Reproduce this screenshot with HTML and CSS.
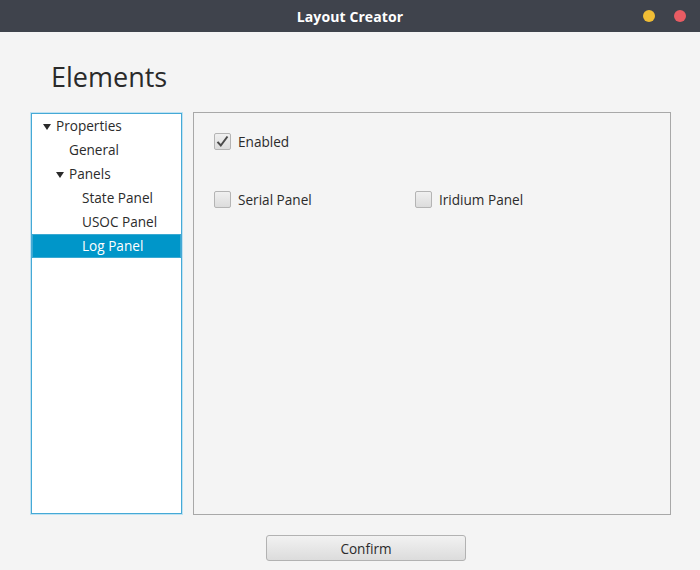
FILE: index.html
```html
<!DOCTYPE html>
<html>
<head>
<meta charset="utf-8">
<link rel="stylesheet" href="styles.css">
</head>
<body>
<div class="window">
  <div class="titlebar">
    <div class="title">Layout Creator</div>
    <div class="controls">
      <span class="dot min"></span>
      <span class="dot close"></span>
    </div>
  </div>
  <div class="content">
    <h1 class="heading">Elements</h1>
    <div class="main">
      <div class="tree">
        <div class="row lvl0"><span class="arrow"></span>Properties</div>
        <div class="row lvl1">General</div>
        <div class="row lvl1"><span class="arrow"></span>Panels</div>
        <div class="row lvl2">State Panel</div>
        <div class="row lvl2">USOC Panel</div>
        <div class="row lvl2 selected">Log Panel</div>
      </div>
      <div class="panel">
        <label class="check first">
          <span class="box">
            <svg width="13" height="13" viewBox="0 0 13 13"><path d="M1.5 6.8 L4.8 10.5 L11.5 1.5" fill="none" stroke="#4a4a4a" stroke-width="2"/></svg>
          </span>
          Enabled
        </label>
        <div class="checkrow">
          <label class="check serial"><span class="box"></span>Serial Panel</label>
          <label class="check"><span class="box"></span>Iridium Panel</label>
        </div>
      </div>
    </div>
    <div class="footer">
      <button class="btn">Confirm</button>
    </div>
  </div>
</div>
</body>
</html>
```
FILE: styles.css
```css
html, body {
  margin: 0;
  padding: 0;
}
body {
  width: 700px;
  height: 570px;
  overflow: hidden;
  background: #f4f4f4;
  font-family: "Open Sans", "Noto Sans", sans-serif;
  color: #2b2b2b;
}
.window {
  display: flex;
  flex-direction: column;
  height: 570px;
}
.titlebar {
  height: 32px;
  background: #3f434c;
  display: flex;
  align-items: center;
  justify-content: center;
  position: relative;
  flex: none;
}
.title {
  color: #ffffff;
  font-family: "Open Sans", "DejaVu Sans", sans-serif;
  font-weight: 700;
  font-size: 14px;
  letter-spacing: 0.1px;
}
.controls {
  position: absolute;
  right: 14px;
  top: 10px;
  display: flex;
  gap: 19px;
}
.dot {
  width: 12px;
  height: 12px;
  border-radius: 50%;
  display: block;
}
.dot.min { background: #f0bd35; }
.dot.close { background: #e85c63; }
.content {
  flex: 1;
  display: flex;
  flex-direction: column;
  padding: 0 29px 0 31px;
}
.heading {
  margin: 28px 0 0 20px;
  height: 52px;
  font-weight: 400;
  font-size: 27px;
  line-height: 34px;
  color: #2a2a2a;
}
.main {
  display: flex;
  gap: 11px;
  height: 403px;
}
.tree {
  width: 149px;
  height: 399px;
  margin-top: 1px;
  background: #ffffff;
  border: 1px solid #45a9d6;
  box-shadow: 0 0 0 1px #bfe2f2;
  padding-top: 0;
  box-sizing: content-box;
}
.row {
  height: 24px;
  line-height: 24px;
  font-size: 13.6px;
  color: #2b2b2b;
  display: flex;
  align-items: center;
  white-space: nowrap;
}
.lvl0 { padding-left: 11px; }
.lvl1 { padding-left: 37px; }
.lvl1:has(.arrow) { padding-left: 24px; }
.lvl2 { padding-left: 50px; }
.arrow {
  width: 0;
  height: 0;
  border-left: 4px solid transparent;
  border-right: 4px solid transparent;
  border-top: 6px solid #2b2b2b;
  margin-right: 5px;
  margin-top: 1px;
}
.row.selected {
  background: #0096c9;
  color: #ffffff;
  box-shadow: inset 0 0 0 1px #3aa9d2;
}
.panel {
  flex: 1;
  height: 403px;
  border: 1px solid #a8a8a8;
  background: #f4f4f4;
  padding: 19px 0 0 20px;
  box-sizing: border-box;
}
.check {
  display: flex;
  align-items: center;
  font-size: 13.6px;
  color: #2b2b2b;
  height: 18px;
}
.box {
  width: 15px;
  height: 15px;
  border: 1px solid #b4b4b4;
  border-radius: 2px;
  background: linear-gradient(#f0f0f0, #dcdcdc);
  margin-right: 7px;
  display: flex;
  align-items: center;
  justify-content: center;
  flex: none;
}
.checkrow {
  display: flex;
  margin-top: 40px;
}
.check.serial {
  width: 201px;
}
.footer {
  display: flex;
  justify-content: center;
  padding-top: 20px;
}
.btn {
  width: 200px;
  height: 26px;
  border: 1px solid #b2b2b2;
  border-radius: 3px;
  background: linear-gradient(#f2f2f2, #dcdcdc);
  font-family: "Open Sans", "Noto Sans", sans-serif;
  font-size: 13.6px;
  color: #2b2b2b;
  padding: 0;
  margin-left: 30px;
}
```
